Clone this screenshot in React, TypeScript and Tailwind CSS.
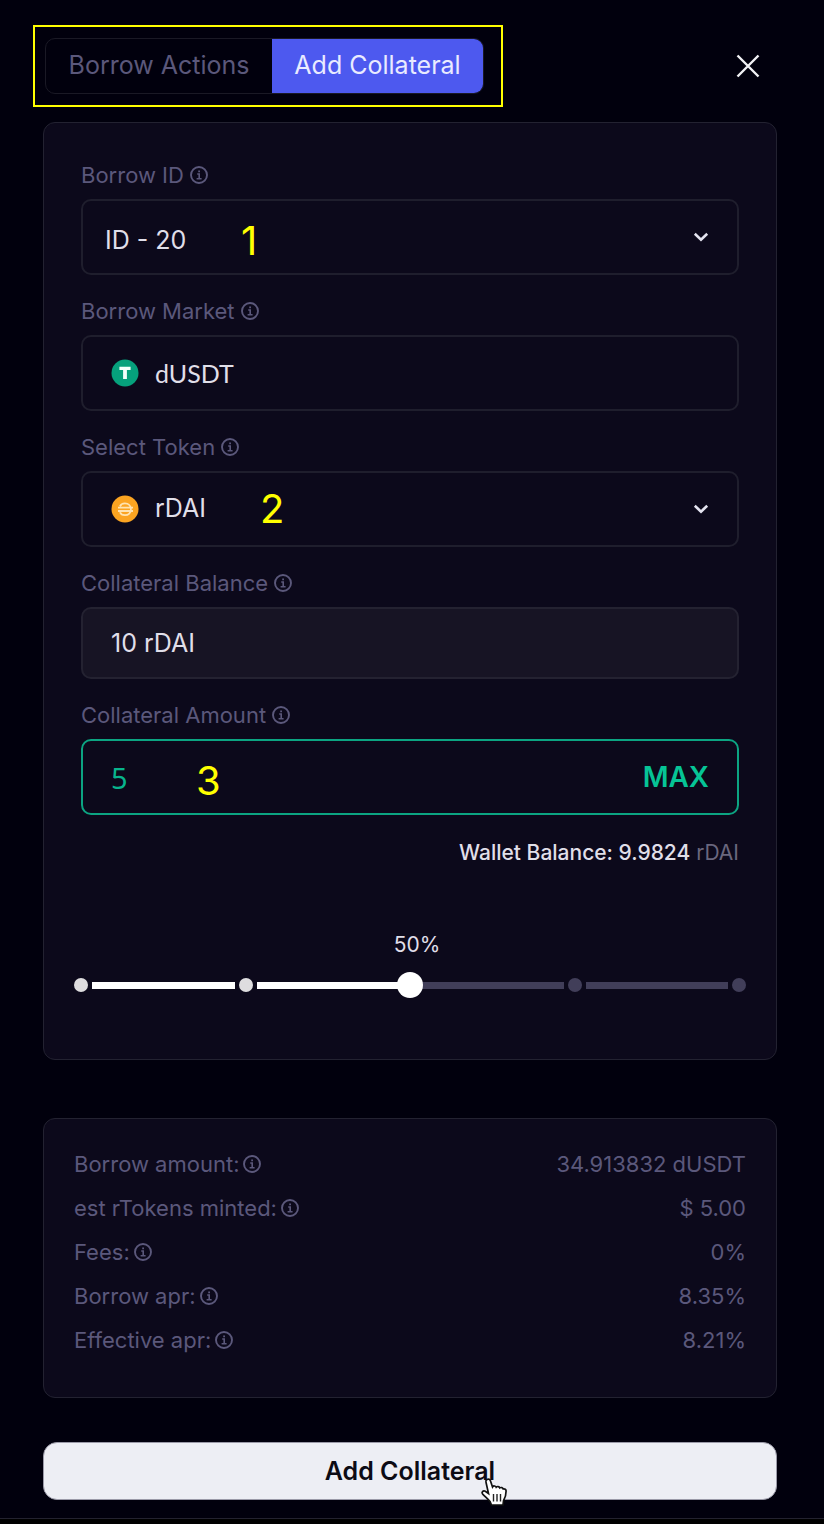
import { useState } from "react";
import type { ReactNode } from "react";

function InfoIcon() {
  return (
    <svg viewBox="0 0 18 18" className="size-[18px] shrink-0" fill="none" stroke="currentColor" aria-hidden="true">
      <circle cx="9" cy="9" r="8" strokeWidth="1.9" />
      <path d="M7.2 8h2v4.6M6.6 12.7h5" strokeWidth="1.6" />
      <path d="M8.2 5.3h1.8" strokeWidth="1.8" />
    </svg>
  );
}

function Chevron() {
  return (
    <svg
      viewBox="0 0 16 10"
      className="pointer-events-none absolute top-1/2 right-7 h-2.5 w-4 -translate-y-1/2"
      fill="none"
      stroke="#e4e4f0"
      strokeWidth="2.6"
      aria-hidden="true"
    >
      <path d="M1.8 1.8 8 7.6l6.2-5.8" />
    </svg>
  );
}

function TetherIcon() {
  return (
    <svg viewBox="0 0 28 28" className="size-7 shrink-0" aria-hidden="true">
      <circle cx="14" cy="14" r="13.5" fill="#06a17c" />
      <path d="M8.4 7.8h11.2v3.3h-3.7v8.9h-3.8v-8.9H8.4z" fill="#f2fffb" />
    </svg>
  );
}

function DaiIcon() {
  return (
    <svg viewBox="0 0 28 28" className="size-7 shrink-0" aria-hidden="true">
      <circle cx="14" cy="14" r="13.5" fill="#fba421" />
      <path
        d="M9 11.4c.8-2.2 2.4-3 4.9-3 3.7 0 6 2.4 6 5.9s-2.3 5.9-6 5.9c-2.5 0-4.1-.8-4.9-3M7 12.6h15M7 16h15"
        fill="none"
        stroke="#ffe3b0"
        strokeWidth="1.8"
      />
    </svg>
  );
}

function HandCursor() {
  return (
    <svg viewBox="0 0 28 30" className="pointer-events-none absolute -right-3 -bottom-5 h-[30px] w-7" aria-hidden="true">
      <path
        d="M8 2.5c1.5-.9 3 0 3.5 1.5l2 6c.8-1.4 3-1.4 3.7.2 1-1.1 3-.9 3.6.7 1.2-.8 2.9-.3 3.4 1.1 1.6-.4 2.9.5 2.9 2.1 0 5-1.1 7.2-2.6 9.7L24 28H12.5l-1.5-3.5c-2-2.5-4.5-4.5-7.3-7.3-1.7-1.9.4-4 2.6-3l3.2 2.3L7 5.3c-.4-1.1 0-2.2 1-2.8z"
        fill="#fff"
        stroke="#111"
        strokeWidth="1.7"
      />
      <path d="M14.5 17v7.5M18 17v7.5M21.5 17v7.5" stroke="#222" strokeWidth="1.4" />
    </svg>
  );
}

function FieldLabel({ htmlFor, children }: { htmlFor: string; children: ReactNode }) {
  return (
    <label htmlFor={htmlFor} className="mb-3 flex h-6 items-center gap-1.5 text-[22px] leading-6 text-[#5b587b]">
      {children}
      <InfoIcon />
    </label>
  );
}

const summary = [
  ["Borrow amount:", "34.913832 dUSDT"],
  ["est rTokens minted:", "$ 5.00"],
  ["Fees:", "0%"],
  ["Borrow apr:", "8.35%"],
  ["Effective apr:", "8.21%"],
];

const stops = [0, 25, 50, 75, 100];

export default function App() {
  const [percent, setPercent] = useState(50);

  return (
    <div className="min-h-screen bg-black font-['Inter',sans-serif]">
      <div className="border-b border-[#23222f] bg-[#01000d] pt-[25px] pb-[18px]">
        <header className="flex items-center justify-between pr-[62px] pl-[33px]">
          <div className="border-2 border-[#ffff00] pt-[11px] pr-[17px] pb-[11px] pl-2.5">
            <div className="flex h-14 overflow-hidden rounded-[10px] border border-[#1a1925] text-[25px]">
              <button type="button" className="w-[226px] text-[#5b587b]">
                Borrow Actions
              </button>
              <button type="button" className="w-[211px] bg-[#4d59ef] text-[#e9ebff]">
                Add Collateral
              </button>
            </div>
          </div>
          <button type="button" aria-label="Close">
            <svg viewBox="0 0 28 28" className="size-7" stroke="#f1f1f5" strokeWidth="2.4" aria-hidden="true">
              <path d="m3.5 3.5 21 21M24.5 3.5l-21 21" />
            </svg>
          </button>
        </header>

        <main className="mt-[15px] mr-[47px] ml-[43px]">
          <section className="rounded-xl border border-[#232231] bg-[#0c091b] px-[37px] pt-10 pb-[62px] text-[25px] text-[#e0dfe9]">
            <FieldLabel htmlFor="borrow-id">Borrow ID</FieldLabel>
            <div className="relative h-19 rounded-[10px] border-2 border-[#1f1e2d]">
              <select id="borrow-id" className="size-full appearance-none pt-2 pl-[22px]">
                <option className="bg-[#0c091b]">ID - 20</option>
              </select>
              <span className="absolute inset-y-0 left-[158px] flex items-center pt-2 text-[40px] text-[#ffff00]">1</span>
              <Chevron />
            </div>

            <div className="mt-6">
              <FieldLabel htmlFor="borrow-market">Borrow Market</FieldLabel>
              <div className="flex h-19 items-center gap-4 rounded-[10px] border-2 border-[#1f1e2d] pl-7">
                <TetherIcon />
                <input
                  id="borrow-market"
                  readOnly
                  defaultValue="dUSDT"
                  className="h-full min-w-0 flex-1 font-['Lato',sans-serif] outline-none"
                />
              </div>
            </div>

            <div className="mt-6">
              <FieldLabel htmlFor="token">Select Token</FieldLabel>
              <div className="relative flex h-19 items-center gap-4 rounded-[10px] border-2 border-[#1f1e2d] pl-7">
                <DaiIcon />
                <select id="token" className="h-full min-w-0 flex-1 appearance-none">
                  <option className="bg-[#0c091b]">rDAI</option>
                </select>
                <span className="absolute inset-y-0 left-[177px] flex items-center text-[40px] text-[#ffff00]">2</span>
                <Chevron />
              </div>
            </div>

            <div className="mt-6">
              <FieldLabel htmlFor="balance">Collateral Balance</FieldLabel>
              <input
                id="balance"
                readOnly
                defaultValue="10 rDAI"
                className="block h-18 w-full rounded-[10px] border-2 border-[#242231] bg-[#171424] px-7 outline-none"
              />
            </div>

            <div className="mt-6">
              <FieldLabel htmlFor="amount">Collateral Amount</FieldLabel>
              <div className="relative flex h-19 items-center rounded-[10px] border-2 border-[#0ca482] px-7">
                <input
                  id="amount"
                  defaultValue="5"
                  inputMode="decimal"
                  className="h-full min-w-0 flex-1 font-['Noto_Sans',sans-serif] text-[29px] text-[#08b48c] outline-none"
                />
                <span className="pointer-events-none absolute inset-y-0 left-[113px] flex items-center pt-2 text-[40px] text-[#ffff00]">
                  3
                </span>
                <button type="button" className="text-[28px] font-semibold text-[#06c496]">
                  MAX
                </button>
              </div>
            </div>

            <p className="mt-6.5 h-6 text-right text-[21px] leading-6">
              <span className="font-medium">Wallet Balance: 9.9824</span> <span className="text-[#6a677e]">rDAI</span>
            </p>

            <output htmlFor="percent" className="mt-17 block h-6 pl-3.5 text-center text-[21px] leading-6">
              {percent}%
            </output>
            <div className="relative -mx-[7px] mt-4 flex h-6 items-center">
              {stops.map((stop) => (
                <div key={stop} className={stop === 0 ? "flex items-center" : "flex flex-1 items-center"}>
                  {stop > 0 && (
                    <div className={stop <= percent ? "mx-1 h-[7px] flex-1 bg-white" : "mx-1 h-[7px] flex-1 bg-[#413e59]"} />
                  )}
                  <div
                    className={
                      stop === percent
                        ? "relative -mx-1.5 size-[26px] rounded-full bg-white"
                        : stop < percent
                          ? "size-3.5 rounded-full bg-[#dedddf]"
                          : "size-3.5 rounded-full bg-[#413e59]"
                    }
                  />
                </div>
              ))}
              <input
                id="percent"
                type="range"
                min={0}
                max={100}
                step={25}
                value={percent}
                onChange={(event) => setPercent(Number(event.target.value))}
                aria-label="Share of balance"
                className="absolute inset-0 size-full cursor-pointer opacity-0"
              />
            </div>
          </section>

          <dl className="mt-[58px] rounded-xl border border-[#232231] bg-[#0c091b] px-[30px] pt-[23px] pb-[35px] text-[22px] text-[#5b587b]">
            {summary.map(([name, value]) => (
              <div key={name} className="flex h-11 items-center justify-between">
                <dt className="flex items-center gap-1">
                  {name}
                  <InfoIcon />
                </dt>
                <dd>{value}</dd>
              </div>
            ))}
          </dl>

          <button
            type="button"
            className="mt-11 flex h-[58px] w-full items-center justify-center rounded-[14px] border border-[#9b9aa8] bg-[#edeef4] text-[25px] font-semibold text-[#0c0b14]"
          >
            <span className="relative leading-8">
              Add Collateral
              <HandCursor />
            </span>
          </button>
        </main>
      </div>
    </div>
  );
}
